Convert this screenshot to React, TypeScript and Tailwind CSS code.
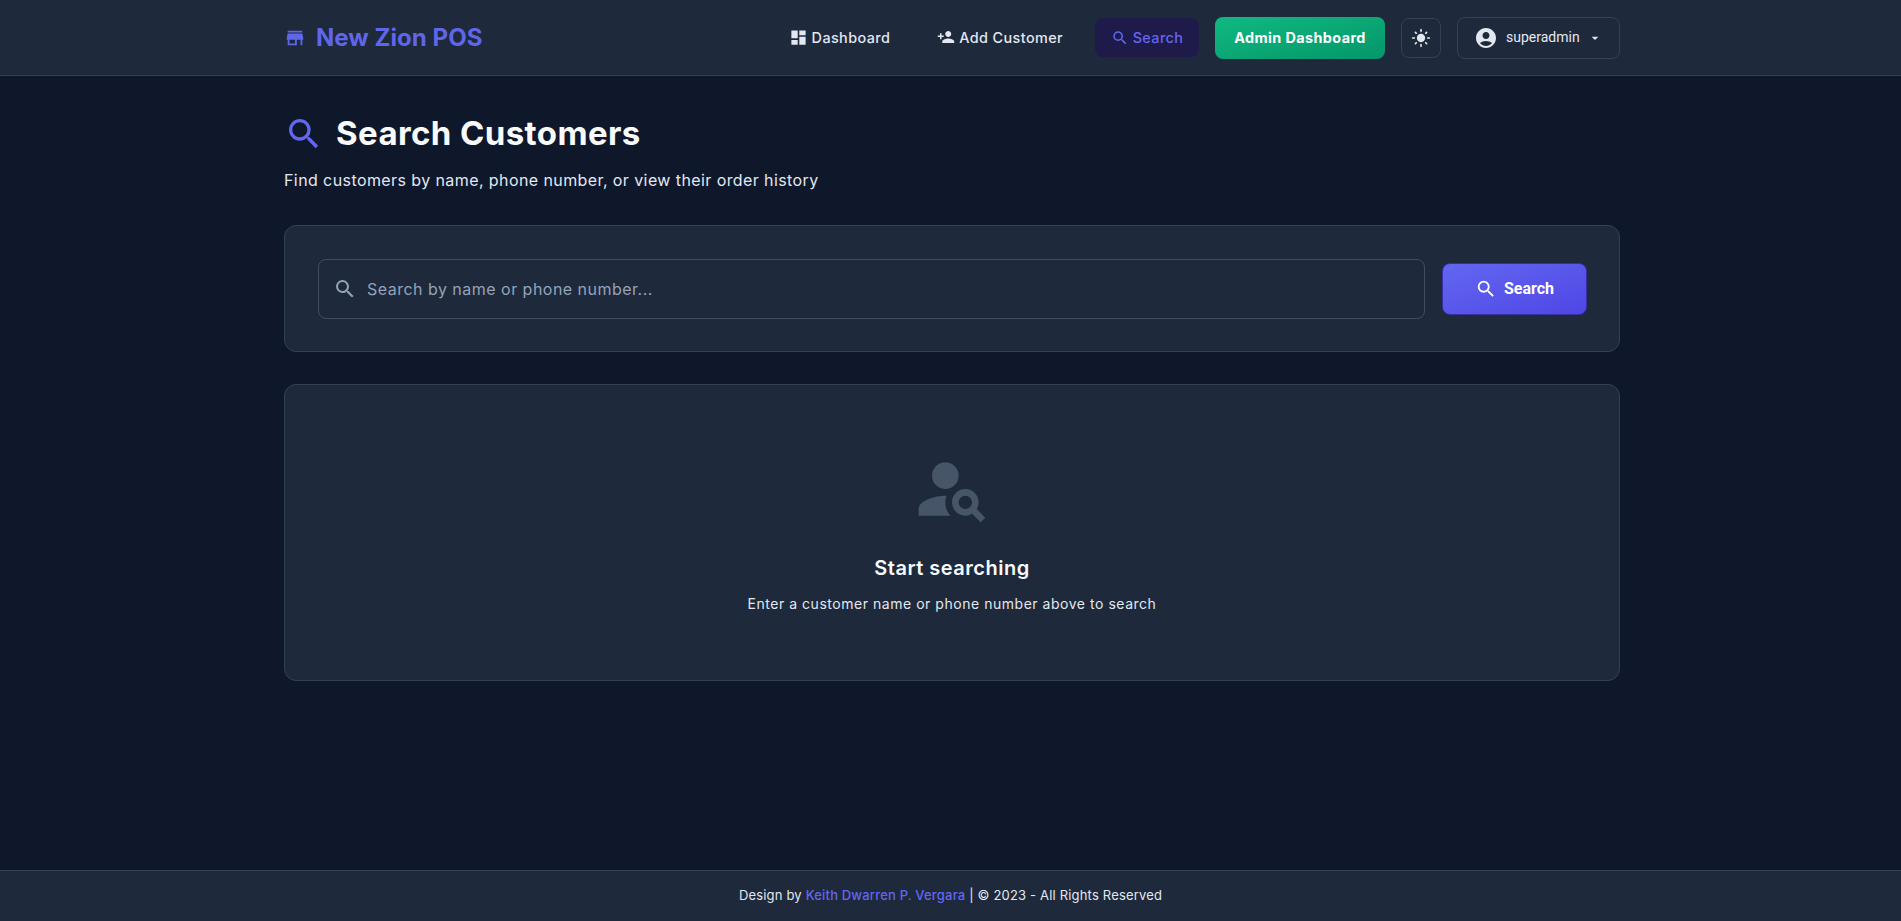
import { MdStore, MdDashboard, MdPersonAdd, MdSearch, MdLightMode, MdAccountCircle, MdArrowDropDown, MdPersonSearch } from "react-icons/md";

export default function App() {
  return (
    <div className="min-h-screen flex flex-col bg-[#0f172a] font-['Inter',sans-serif] text-white">
      <header className="h-[76px] shrink-0 bg-[#1e293b] border-b border-[#334155] flex items-center pl-[284px]">
        <div className="w-[1336px] flex items-center">
          <div className="flex items-center text-[#5f66e9]">
            <MdStore size={22} className="mr-[10px]" />
            <span className="text-[24px] font-bold tracking-[0.05px]">New Zion POS</span>
          </div>
          <nav className="ml-auto flex items-center text-[14.4px] font-medium tracking-[0.4px] text-[#e2e8f0]">
            <a className="flex items-center mr-[47px]"><MdDashboard size={19} className="mr-1" />Dashboard</a>
            <a className="flex items-center mr-[32px]"><MdPersonAdd size={18} className="mr-1" />Add Customer</a>
            <a className="flex items-center justify-center h-[39px] w-[104px] rounded-lg bg-[#1e1b4b] text-[#6366f1] mr-[16px]"><MdSearch size={18} className="mr-1" />Search</a>
            <button className="h-[42px] w-[170px] rounded-lg bg-gradient-to-br from-[#10b981] to-[#059669] text-white font-bold mr-4">Admin Dashboard</button>
            <button className="h-10 w-10 rounded-lg border border-[#334155] flex items-center justify-center mr-4"><MdLightMode size={20} /></button>
            <button className="h-[42px] w-[163px] rounded-lg border border-[#334155] flex items-center pl-4 font-['Roboto',sans-serif] font-normal text-[14px] tracking-normal"><MdAccountCircle size={24} className="mr-[8px]" /><span>superadmin</span><MdArrowDropDown size={16} className="ml-[7px]" /></button>
          </nav>
        </div>
      </header>

      <main className="flex-1 pl-[284px]">
        <div className="w-[1336px] pt-[38px]">
          <h1 className="flex items-center h-[40px] text-[33px] font-bold tracking-[0.4px] text-[#f8fafc]"><MdSearch size={40} className="text-[#6366f1] mr-[12px]" />Search Customers</h1>
          <p className="mt-[14px] text-[16px] leading-6 tracking-[0.41px] text-[#e2e8f0]">Find customers by name, phone number, or view their order history</p>

          <section className="mt-[33px] h-[127px] rounded-xl border border-[#334155] bg-[#1e293b] flex items-center pl-[33px] pr-[32px]">
            <div className="flex-1 h-[60px] rounded-lg border border-[#3f4d63] flex items-center pl-[14px] text-[#94a3b8]">
              <MdSearch size={24} className="mr-[10px]" />
              <span className="text-[16px] tracking-[0.48px]">Search by name or phone number...</span>
            </div>
            <button className="ml-[17px] h-[52px] w-[145px] rounded-lg border border-[#3730a3] bg-gradient-to-br from-[#6366f1] to-[#4f46e5] flex items-center justify-center text-[16px] font-bold font-['Roboto',sans-serif]"><MdSearch size={22} className="mr-[7px]" />Search</button>
          </section>

          <section className="mt-[32px] h-[297px] rounded-xl border border-[#334155] bg-[#1e293b] flex flex-col items-center pt-[64px]">
            <MdPersonSearch size={80} className="text-[#475569]" />
            <h3 className="mt-[24px] text-[20px] font-semibold tracking-[0.5px] text-[#f8fafc]">Start searching</h3>
            <p className="mt-[10px] text-[14px] tracking-[0.53px] text-[#e2e8f0]">Enter a customer name or phone number above to search</p>
          </section>
        </div>
      </main>

      <footer className="h-[51px] shrink-0 bg-[#1e293b] border-t border-[#334155] flex items-center justify-center text-[13px] tracking-[0.18px] text-[#e2e8f0]">
        <span>Design by <span className="text-[#6366f1] font-medium">Keith Dwarren P. Vergara</span> | © 2023 - All Rights Reserved</span>
      </footer>
    </div>
  );
}
